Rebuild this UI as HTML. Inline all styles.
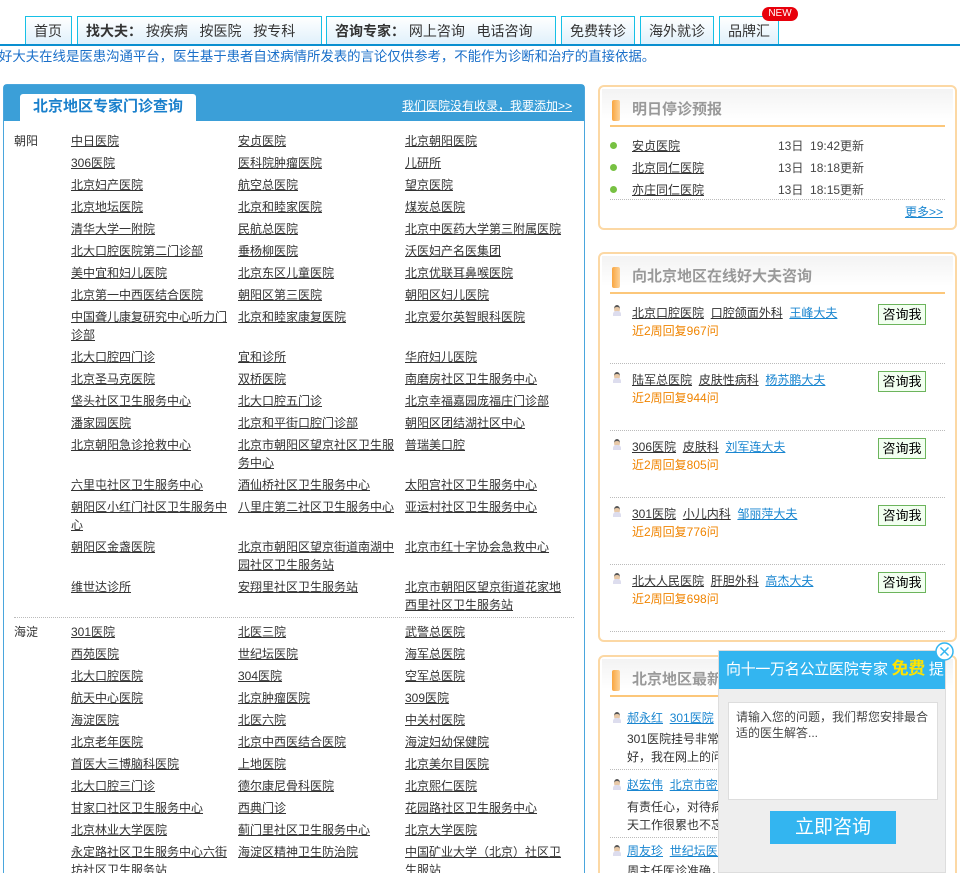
<!DOCTYPE html>
<html><head><meta charset="utf-8">
<style>
*{margin:0;padding:0;box-sizing:border-box}
html,body{width:960px;height:873px;overflow:hidden}
body{background:#fff;font-family:"Liberation Sans","Noto Sans CJK SC",sans-serif;font-size:12px;color:#333;position:relative}
a{color:#333;text-decoration:underline}
.abs{position:absolute}
.tab{position:absolute;top:16px;height:29px;border:1px solid #16c0e6;border-bottom:none;background:linear-gradient(#fff,#dff0fb);font-size:14px;line-height:28px;color:#333;white-space:nowrap;padding:0 8px}
.tab b{font-weight:bold}
.navline{position:absolute;left:0;top:44px;width:960px;height:2px;background:#0a8fd0}
.notice{position:absolute;left:-1px;top:48px;font-size:13.4px;color:#1a6fc9;line-height:18px;white-space:nowrap}
.lbox{position:absolute;left:3px;top:84px;width:582px;height:800px;border:1px solid #4aa6dd;border-radius:4px 4px 0 0;background:#fff}
.lhead{height:36px;background:#3b9fd8}
.ltab{position:absolute;left:16px;top:9px;width:176px;height:28px;background:#fff;border-radius:3px 3px 0 0;color:#1a80cc;font-size:15px;font-weight:bold;text-align:center;line-height:26px}
.ladd{position:absolute;right:12px;top:12px;color:#fff;font-size:12px;text-decoration:underline}
.dist{position:absolute;left:10px;width:560px}
.row{display:flex;padding:2px 0;line-height:18px}
.row .c{width:167px;padding-right:7px}
.dn{position:absolute;left:0;top:2px;line-height:18px}
.rows{margin-left:57px}
.sep{position:absolute;left:10px;width:560px;border-top:1px dotted #bbb}
.rbox{position:absolute;left:598px;width:359px;border:2px solid #fcd8a4;border-radius:6px;background:#fff}
.rbox .in{position:absolute;left:2px;top:2px;right:2px;height:30px;background:linear-gradient(#f3f3f3,#fff)}
.rt{position:absolute;left:12px;top:12px;font-size:15px;font-weight:bold;color:#999;line-height:22px;padding-left:20px;white-space:nowrap}
.rt:before{content:"";position:absolute;left:0;top:1px;width:8px;height:21px;background:linear-gradient(90deg,#f9a640,#fdd39a);border-radius:2px}
.rl{position:absolute;left:10px;right:10px;top:38px;border-top:2px solid #fcc77a}
.dot{position:absolute;width:7px;height:7px;border-radius:50%;background:#77c142}
.tm{position:absolute;left:178px;color:#444}
.cb{position:absolute;left:278px;width:48px;height:21px;border:1px solid #6cb45c;background:#f2fff0;color:#000;font-size:13px;line-height:19px;text-align:center}
.av{position:absolute;width:10px;height:11px}
.av:before{content:"";position:absolute;left:2px;top:0;width:6px;height:6px;border-radius:50%;background:#e8c9a8;border-top:2px solid #555}
.av:after{content:"";position:absolute;left:1px;top:6px;width:8px;height:5px;background:#dde;border-radius:3px 3px 0 0}
.org{color:#f08400}
.blu{color:#1a86d0}
.dsep{position:absolute;left:10px;right:10px;border-top:1px dotted #bbb}
</style></head><body>

<div class="tab" style="left:25px;width:47px">首页</div>
<div class="tab" style="left:77px;width:245px"><b>找大夫：</b>&nbsp;按疾病&nbsp;&nbsp;&nbsp;按医院&nbsp;&nbsp;&nbsp;按专科</div>
<div class="tab" style="left:326px;width:230px"><b>咨询专家：</b>&nbsp;网上咨询&nbsp;&nbsp;&nbsp;电话咨询</div>
<div class="tab" style="left:561px;width:74px">免费转诊</div>
<div class="tab" style="left:640px;width:74px">海外就诊</div>
<div class="tab" style="left:719px;width:60px">品牌汇</div>
<div class="abs" style="left:762px;top:7px;width:36px;height:14px;background:#e8000b;border-radius:7px;color:#fff;font-size:10px;line-height:14px;text-align:center">NEW</div>
<div class="navline"></div>
<div class="notice">好大夫在线是医患沟通平台，医生基于患者自述病情所发表的言论仅供参考，不能作为诊断和治疗的直接依据。</div>

<div class="lbox">
 <div class="lhead"></div>
 <div class="ltab">北京地区专家门诊查询</div>
 <div class="ladd">我们医院没有收录，我要添加&gt;&gt;</div>
 <div class="dist" style="top:45px">
  <div class="dn">朝阳</div>
  <div class="rows">
   <div class="row"><div class="c"><a>中日医院</a></div><div class="c"><a>安贞医院</a></div><div class="c"><a>北京朝阳医院</a></div></div>
   <div class="row"><div class="c"><a>306医院</a></div><div class="c"><a>医科院肿瘤医院</a></div><div class="c"><a>儿研所</a></div></div>
   <div class="row"><div class="c"><a>北京妇产医院</a></div><div class="c"><a>航空总医院</a></div><div class="c"><a>望京医院</a></div></div>
   <div class="row"><div class="c"><a>北京地坛医院</a></div><div class="c"><a>北京和睦家医院</a></div><div class="c"><a>煤炭总医院</a></div></div>
   <div class="row"><div class="c"><a>清华大学一附院</a></div><div class="c"><a>民航总医院</a></div><div class="c"><a>北京中医药大学第三附属医院</a></div></div>
   <div class="row"><div class="c"><a>北大口腔医院第二门诊部</a></div><div class="c"><a>垂杨柳医院</a></div><div class="c"><a>沃医妇产名医集团</a></div></div>
   <div class="row"><div class="c"><a>美中宜和妇儿医院</a></div><div class="c"><a>北京东区儿童医院</a></div><div class="c"><a>北京优联耳鼻喉医院</a></div></div>
   <div class="row"><div class="c"><a>北京第一中西医结合医院</a></div><div class="c"><a>朝阳区第三医院</a></div><div class="c"><a>朝阳区妇儿医院</a></div></div>
   <div class="row"><div class="c"><a>中国聋儿康复研究中心听力门诊部</a></div><div class="c"><a>北京和睦家康复医院</a></div><div class="c"><a>北京爱尔英智眼科医院</a></div></div>
   <div class="row"><div class="c"><a>北大口腔四门诊</a></div><div class="c"><a>宜和诊所</a></div><div class="c"><a>华府妇儿医院</a></div></div>
   <div class="row"><div class="c"><a>北京圣马克医院</a></div><div class="c"><a>双桥医院</a></div><div class="c"><a>南磨房社区卫生服务中心</a></div></div>
   <div class="row"><div class="c"><a>垡头社区卫生服务中心</a></div><div class="c"><a>北大口腔五门诊</a></div><div class="c"><a>北京幸福嘉园庞福庄门诊部</a></div></div>
   <div class="row"><div class="c"><a>潘家园医院</a></div><div class="c"><a>北京和平街口腔门诊部</a></div><div class="c"><a>朝阳区团结湖社区中心</a></div></div>
   <div class="row"><div class="c"><a>北京朝阳急诊抢救中心</a></div><div class="c"><a>北京市朝阳区望京社区卫生服务中心</a></div><div class="c"><a>普瑞美口腔</a></div></div>
   <div class="row"><div class="c"><a>六里屯社区卫生服务中心</a></div><div class="c"><a>酒仙桥社区卫生服务中心</a></div><div class="c"><a>太阳宫社区卫生服务中心</a></div></div>
   <div class="row"><div class="c"><a>朝阳区小红门社区卫生服务中心</a></div><div class="c"><a>八里庄第二社区卫生服务中心</a></div><div class="c"><a>亚运村社区卫生服务中心</a></div></div>
   <div class="row"><div class="c"><a>朝阳区金盏医院</a></div><div class="c"><a>北京市朝阳区望京街道南湖中园社区卫生服务站</a></div><div class="c"><a>北京市红十字协会急救中心</a></div></div>
   <div class="row"><div class="c"><a>维世达诊所</a></div><div class="c"><a>安翔里社区卫生服务站</a></div><div class="c"><a>北京市朝阳区望京街道花家地西里社区卫生服务站</a></div></div>
  </div>
 </div>
 <div class="sep" style="top:532px"></div>
 <div class="dist" style="top:536px">
  <div class="dn">海淀</div>
  <div class="rows">
   <div class="row"><div class="c"><a>301医院</a></div><div class="c"><a>北医三院</a></div><div class="c"><a>武警总医院</a></div></div>
   <div class="row"><div class="c"><a>西苑医院</a></div><div class="c"><a>世纪坛医院</a></div><div class="c"><a>海军总医院</a></div></div>
   <div class="row"><div class="c"><a>北大口腔医院</a></div><div class="c"><a>304医院</a></div><div class="c"><a>空军总医院</a></div></div>
   <div class="row"><div class="c"><a>航天中心医院</a></div><div class="c"><a>北京肿瘤医院</a></div><div class="c"><a>309医院</a></div></div>
   <div class="row"><div class="c"><a>海淀医院</a></div><div class="c"><a>北医六院</a></div><div class="c"><a>中关村医院</a></div></div>
   <div class="row"><div class="c"><a>北京老年医院</a></div><div class="c"><a>北京中西医结合医院</a></div><div class="c"><a>海淀妇幼保健院</a></div></div>
   <div class="row"><div class="c"><a>首医大三博脑科医院</a></div><div class="c"><a>上地医院</a></div><div class="c"><a>北京美尔目医院</a></div></div>
   <div class="row"><div class="c"><a>北大口腔三门诊</a></div><div class="c"><a>德尔康尼骨科医院</a></div><div class="c"><a>北京熙仁医院</a></div></div>
   <div class="row"><div class="c"><a>甘家口社区卫生服务中心</a></div><div class="c"><a>西典门诊</a></div><div class="c"><a>花园路社区卫生服务中心</a></div></div>
   <div class="row"><div class="c"><a>北京林业大学医院</a></div><div class="c"><a>蓟门里社区卫生服务中心</a></div><div class="c"><a>北京大学医院</a></div></div>
   <div class="row"><div class="c"><a>永定路社区卫生服务中心六街坊社区卫生服务站</a></div><div class="c"><a>海淀区精神卫生防治院</a></div><div class="c"><a>中国矿业大学（北京）社区卫生服站</a></div></div>
  </div>
 </div>
</div>

<div class="rbox" style="top:85px;height:145px">
 <div class="in"></div><div class="rt">明日停诊预报</div><div class="rl"></div>
 <div class="dot" style="left:10px;top:55px"></div><a class="abs" style="left:32px;top:50px">安贞医院</a><span class="tm" style="top:50px">13日&nbsp;&nbsp;19:42更新</span>
 <div class="dot" style="left:10px;top:77px"></div><a class="abs" style="left:32px;top:72px">北京同仁医院</a><span class="tm" style="top:72px">13日&nbsp;&nbsp;18:18更新</span>
 <div class="dot" style="left:10px;top:99px"></div><a class="abs" style="left:32px;top:94px">亦庄同仁医院</a><span class="tm" style="top:94px">13日&nbsp;&nbsp;18:15更新</span>
 <div class="dsep" style="top:112px"></div>
 <a class="abs blu" style="right:12px;top:116px">更多&gt;&gt;</a>
</div>

<div class="rbox" style="top:252px;height:390px">
 <div class="in"></div><div class="rt">向北京地区在线好大夫咨询</div><div class="rl"></div>
 <div class="av" style="left:12px;top:51px"></div><div class="abs" style="left:32px;top:50px"><a>北京口腔医院</a>&nbsp; <a>口腔颌面外科</a>&nbsp; <a class="blu">王峰大夫</a></div><div class="abs org" style="left:32px;top:68px">近2周回复967问</div><div class="cb" style="top:50px">咨询我</div>
 <div class="dsep" style="top:109px"></div>
 <div class="av" style="left:12px;top:118px"></div><div class="abs" style="left:32px;top:117px"><a>陆军总医院</a>&nbsp; <a>皮肤性病科</a>&nbsp; <a class="blu">杨苏鹏大夫</a></div><div class="abs org" style="left:32px;top:135px">近2周回复944问</div><div class="cb" style="top:117px">咨询我</div>
 <div class="dsep" style="top:176px"></div>
 <div class="av" style="left:12px;top:185px"></div><div class="abs" style="left:32px;top:184px"><a>306医院</a>&nbsp; <a>皮肤科</a>&nbsp; <a class="blu">刘军连大夫</a></div><div class="abs org" style="left:32px;top:202px">近2周回复805问</div><div class="cb" style="top:184px">咨询我</div>
 <div class="dsep" style="top:243px"></div>
 <div class="av" style="left:12px;top:252px"></div><div class="abs" style="left:32px;top:251px"><a>301医院</a>&nbsp; <a>小儿内科</a>&nbsp; <a class="blu">邹丽萍大夫</a></div><div class="abs org" style="left:32px;top:269px">近2周回复776问</div><div class="cb" style="top:251px">咨询我</div>
 <div class="dsep" style="top:310px"></div>
 <div class="av" style="left:12px;top:319px"></div><div class="abs" style="left:32px;top:318px"><a>北大人民医院</a>&nbsp; <a>肝胆外科</a>&nbsp; <a class="blu">高杰大夫</a></div><div class="abs org" style="left:32px;top:336px">近2周回复698问</div><div class="cb" style="top:318px">咨询我</div>
 <div class="dsep" style="top:377px"></div>
</div>

<div class="rbox" style="top:655px;height:240px">
 <div class="in"></div><div class="rt">北京地区最新看病经验</div><div class="rl"></div>
 <div class="av" style="left:12px;top:55px"></div><div class="abs" style="left:27px;top:52px"><a class="blu">郝永红</a>&nbsp; <a class="blu">301医院</a></div>
 <div class="abs" style="left:27px;top:73px;line-height:18px;width:320px">301医院挂号非常方便，大夫人也很<br>好，我在网上的问</div>
 <div class="dsep" style="top:112px"></div>
 <div class="av" style="left:12px;top:122px"></div><div class="abs" style="left:27px;top:119px"><a class="blu">赵宏伟</a>&nbsp; <a class="blu">北京市密云县医院</a></div>
 <div class="abs" style="left:27px;top:141px;line-height:18px;width:320px">有责任心，对待病人很耐心，虽然每<br>天工作很累也不忘</div>
 <div class="dsep" style="top:180px"></div>
 <div class="av" style="left:12px;top:188px"></div><div class="abs" style="left:27px;top:185px"><a class="blu">周友珍</a>&nbsp; <a class="blu">世纪坛医院</a></div>
 <div class="abs" style="left:27px;top:205px;white-space:nowrap">周主任医诊准确，和蔼可亲，有耐心地回答患者提出的每一</div>
</div>

<div class="abs" style="left:718px;top:650px;width:228px;height:223px;background:#eee;border:1px solid #ddd">
 <div style="height:38px;background:#33b5f0;color:#fff;font-size:15px;line-height:36px;padding-left:7px;white-space:nowrap;overflow:hidden;letter-spacing:-0.3px">向十一万名公立医院专家 <b style="color:#ffe400;font-size:17px">免费</b> 提</div>
 <div class="abs" style="left:9px;top:51px;width:210px;height:98px;background:#fff;border:1px solid #ddd;padding:6px 7px;font-size:12px;line-height:16px;color:#444">请输入您的问题，我们帮您安排最合适的医生解答...</div>
 <div class="abs" style="left:51px;top:160px;width:126px;height:33px;background:#33b5f0;color:#fff;font-size:19px;line-height:33px;text-align:center">立即咨询</div>
</div>
<svg class="abs" style="left:935px;top:642px" width="19" height="19" viewBox="0 0 19 19"><circle cx="9.5" cy="9.5" r="8.5" fill="#fff" stroke="#33b5f0" stroke-width="1.5"/><path d="M5.5 5.5L13.5 13.5M13.5 5.5L5.5 13.5" stroke="#33b5f0" stroke-width="1.5"/></svg>
</body></html>
